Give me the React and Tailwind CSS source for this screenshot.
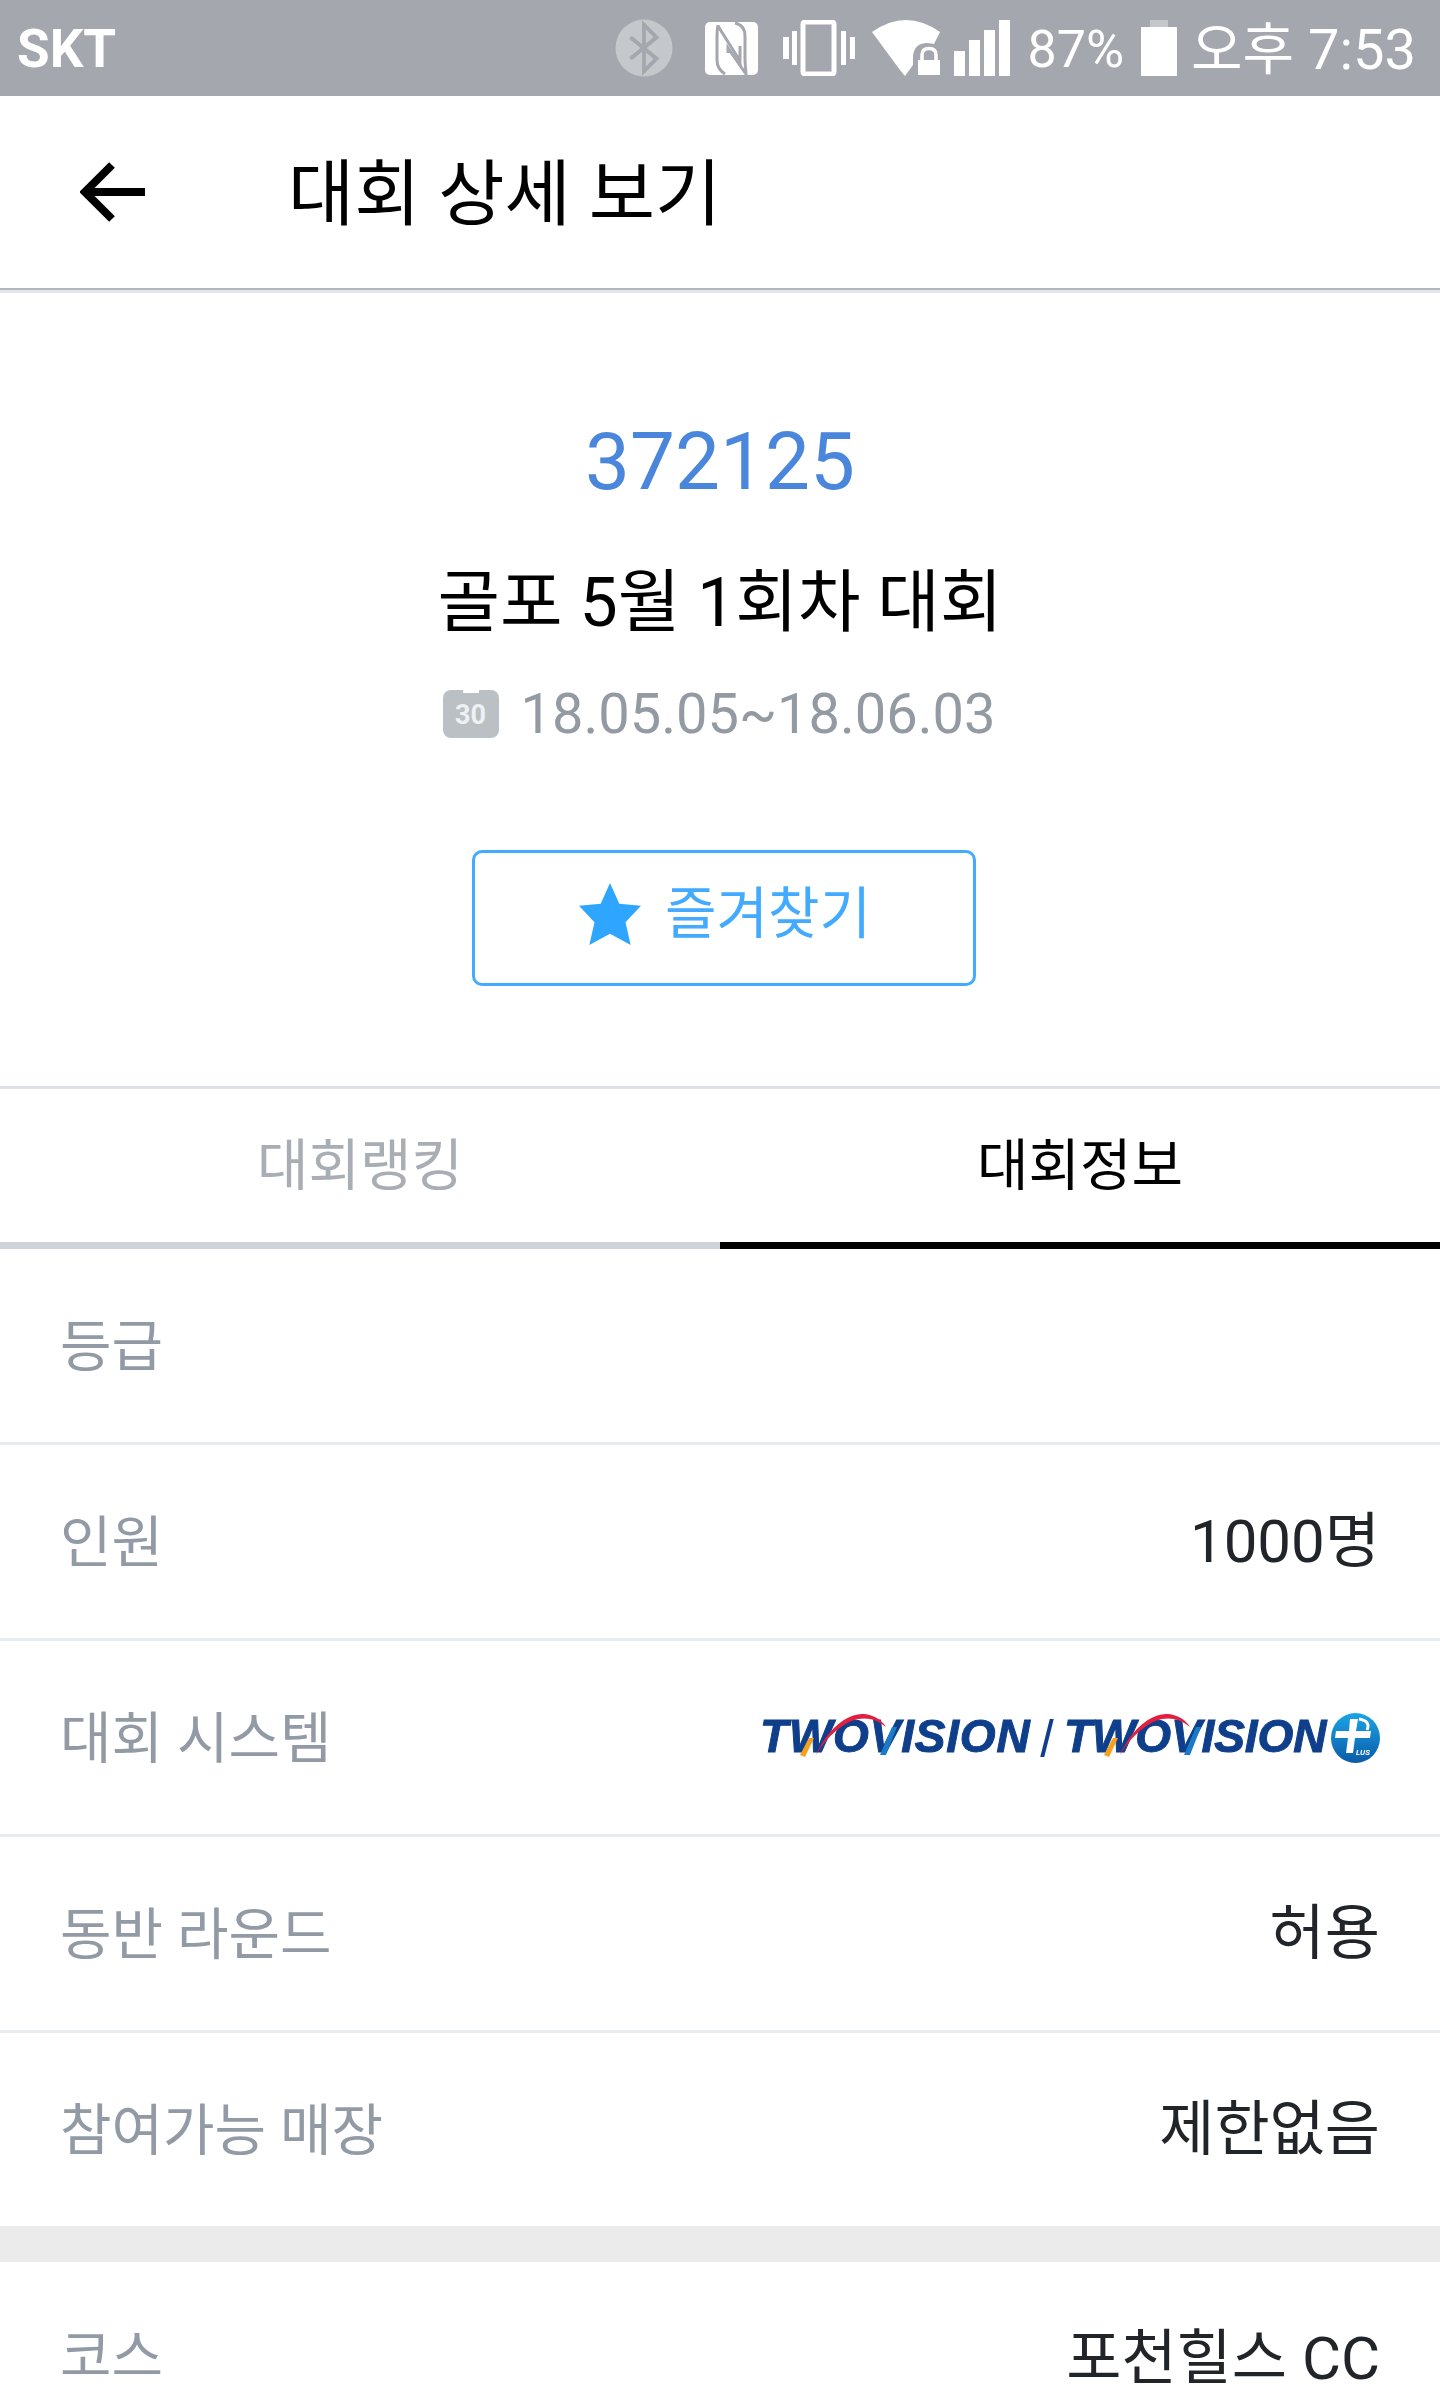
import React from "react";

const font = { fontFamily: '"Roboto", "Noto Sans CJK KR", sans-serif' };

function Bluetooth() {
  return (
    <svg width="58" height="58" viewBox="0 0 60 60" className="block">
      <circle cx="30" cy="30" r="29.5" fill="#c4c8cb" />
      <path d="M16 19 L43 41 L30 54 L30 6 L43 19 L16 41" fill="none" stroke="#a4a7ae" strokeWidth="4" />
    </svg>
  );
}

function Nfc() {
  return (
    <svg width="53" height="53" viewBox="0 0 53 53" className="block">
      <rect width="53" height="53" rx="5" fill="#fff" />
      <path d="M13 3 Q12 8 12 14 L12 38 Q12 47 20 52" fill="none" stroke="#a4a7ae" strokeWidth="3" />
      <path d="M13 4 L35 39 L35 24" fill="none" stroke="#a4a7ae" strokeWidth="3" />
      <path d="M30 1 Q40 3 40 14 L40 39 L41 52 L23 26 L23 31" fill="none" stroke="#a4a7ae" strokeWidth="3" />
    </svg>
  );
}

function Vibrate() {
  return (
    <svg width="72" height="56" viewBox="0 0 72 56" className="block">
      <rect x="0" y="17" width="6" height="22" fill="#fff" />
      <rect x="9" y="11" width="5" height="34" fill="#fff" />
      <rect x="20" y="2" width="31" height="52" rx="2" fill="none" stroke="#fff" strokeWidth="5" />
      <rect x="58" y="11" width="5" height="34" fill="#fff" />
      <rect x="67" y="17" width="5" height="22" fill="#fff" />
    </svg>
  );
}

function Wifi() {
  return (
    <svg width="68" height="56" viewBox="0 0 68 56" className="block">
      <path d="M0 12 Q34 -12 68 12 L62 24 Q58 23 54 23 Q41 24 41 38 L41 45 L33 56 L28 50 Z" fill="#fff" />
      <rect x="46" y="40" width="22" height="15" fill="#fff" />
      <path d="M50 41 L50 35 Q50 28.5 57 28.5 Q64 28.5 64 35 L64 41" fill="none" stroke="#fff" strokeWidth="3.5" />
    </svg>
  );
}

function Signal() {
  return (
    <svg width="56" height="56" viewBox="0 0 56 56" className="block">
      <rect x="0" y="31" width="11" height="25" fill="#fff" />
      <rect x="15" y="20" width="11" height="36" fill="#fff" />
      <rect x="30" y="10" width="11" height="46" fill="#fff" />
      <rect x="45" y="0" width="11" height="56" fill="#fff" />
    </svg>
  );
}

function Battery() {
  return (
    <svg width="36" height="56" viewBox="0 0 36 56" className="block">
      <rect x="9" y="0" width="18" height="7" fill="#c4c8cb" />
      <rect x="0" y="7" width="36" height="49" fill="#fff" />
    </svg>
  );
}

function Calendar() {
  return (
    <div className="relative flex h-[48px] w-[56px] items-center justify-center rounded-[8px] bg-[#bbc0c4]">
      <span className="absolute left-[20px] top-0 h-[3px] w-[16px] bg-white" />
      <span className="mt-[3px] text-[27px] font-bold leading-none text-[#eef0f1]">30</span>
    </div>
  );
}

function Star() {
  return (
    <svg width="62" height="62" viewBox="0 0 60 60" className="block">
      <path d="M30 0 L39 20 L60 22 L45 38 L50 60 L30 49 L10 60 L15 38 L0 22 L21 20Z" fill="#2ea6ff" />
    </svg>
  );
}

function Wordmark({ wide }) {
  return (
    <div className={`relative h-[50px] ${wide ? "w-[270px]" : "w-[262px]"}`}>
      <span
        className={`absolute bottom-[4px] left-0 whitespace-nowrap text-[46px] font-bold italic leading-none text-[#0f3f8a] [-webkit-text-stroke:1px_#0f3f8a] ${
          wide ? "tracking-[0.8px]" : "tracking-[-0.1px]"
        }`}
        style={{ fontFamily: '"Liberation Sans", sans-serif' }}
      >
        TWOVISION
      </span>
      <svg width="270" height="50" viewBox="0 0 270 50" className="absolute left-0 top-0">
        <path d="M56 42 C68 15 88 0 104 1 C114 2 122 7 126 14 C118 7 108 4 98 6 C84 9 68 22 56 42Z" fill="#e21f3f" />
        <path d="M40 42 L49 25 L54 25 L45 44Z" fill="#f5a11c" />
        <path d="M120 42 L132 14 L137 14 L126 42Z" fill="#1a7cc8" />
      </svg>
    </div>
  );
}

function PlusBadge() {
  return (
    <svg width="49" height="50" viewBox="0 0 49 50" className="block">
      <defs>
        <linearGradient id="pb" x1="0" y1="0" x2="0" y2="1">
          <stop offset="0" stopColor="#1aa5e6" />
          <stop offset="1" stopColor="#0b5aa8" />
        </linearGradient>
      </defs>
      <ellipse cx="24.5" cy="25" rx="24.5" ry="25" fill="url(#pb)" />
      <path d="M19 6 L27 6 L25 18 L40 18 L39 25 L24 25 L22 40 L15 40 L17 25 L4 25 L5 18 L18 18Z" fill="#fff" />
      <path d="M28 6 Q40 8 36 17" fill="none" stroke="#fff" strokeWidth="3" />
      <text x="32" y="42" fontSize="8" fontWeight="700" fontStyle="italic" fill="#fff" textAnchor="middle">LUS</text>
    </svg>
  );
}

function Logo() {
  return (
    <div className="flex items-center blur-[0.6px]">
      <Wordmark wide />
      <span className="mx-[15px] block h-[38px] w-[4px] skew-x-[-14deg] bg-[#0f3f8a]" />
      <Wordmark />
      <div className="ml-[5px]">
        <PlusBadge />
      </div>
    </div>
  );
}

function Row({ label, value, last }) {
  return (
    <div
      className={`flex items-center justify-between pl-[60px] pr-[60px] ${
        last ? "h-[193px]" : "h-[196px] border-b-[3px] border-[#e9ecef]"
      }`}
    >
      <span className="mt-[2px] text-[56px] leading-none text-[#929aa6]">{label}</span>
      {typeof value === "string" ? (
        <span className="text-[60px] leading-none text-[#212529]">{value}</span>
      ) : (
        value
      )}
    </div>
  );
}

export default function App() {
  return (
    <div className="h-[2392px] w-[1440px] bg-white" style={font}>
      <div className="flex h-[96px] items-center bg-[#a4a7ae] pl-[17px] pr-[24px] text-white">
        <span className="mt-[3px] text-[53px] font-bold leading-none">SKT</span>
        <div className="ml-auto flex items-center">
          <Bluetooth />
          <div className="ml-[32px]"><Nfc /></div>
          <div className="ml-[25px]"><Vibrate /></div>
          <div className="ml-[17px]"><Wifi /></div>
          <div className="ml-[14px]"><Signal /></div>
          <span className="ml-[18px] mt-[3px] text-[52px] leading-none">87%</span>
          <div className="ml-[17px]"><Battery /></div>
          <span className="ml-[14px] mt-[3px] text-[56px] leading-none">오후 7:53</span>
        </div>
      </div>

      <div className="flex h-[192px] items-center pl-[80px]">
        <svg width="66" height="60" viewBox="0 0 66 60" className="block">
          <path d="M32 3 L5 30 L32 57 M5 30 L65 30" fill="none" stroke="#000" strokeWidth="8" />
        </svg>
        <span className="ml-[142px] mt-[6px] text-[72px] leading-none text-black">대회 상세 보기</span>
      </div>
      <div className="h-[2px] bg-[#b3b7be]" />
      <div className="h-[3px] bg-[#e4e7ea]" />

      <div className="flex h-[796px] flex-col items-center border-b-[3px] border-[#dee2e6] pt-[124px]">
        <div className="text-[80px] leading-[90px] text-[#4a86dc]">372125</div>
        <div className="mt-[56px] text-[68px] leading-[80px] text-black">골포 5월 1회차 대회</div>
        <div className="mr-[2px] mt-[41px] flex h-[60px] items-center">
          <Calendar />
          <span className="ml-[22px] text-[56px] leading-none text-[#939aa1]">18.05.05~18.06.03</span>
        </div>
        <div className="ml-[7px] mt-[106px] flex h-[136px] w-[504px] items-center justify-center rounded-[10px] border-[3px] border-[#42abff] pb-[8px] pl-[3px] text-[#42abff]">
          <Star />
          <span className="ml-[24px] text-[56px] leading-none">즐겨찾기</span>
        </div>
      </div>

      <div className="grid h-[160px] grid-cols-2 text-[56px] leading-none">
        <div className="flex items-center justify-center border-b-[7px] border-[#ced4da] text-[#a9aeb4]">대회랭킹</div>
        <div className="flex items-center justify-center border-b-[7px] border-black text-black">대회정보</div>
      </div>

      <Row label="등급" value="" />
      <Row label="인원" value="1000명" />
      <Row label="대회 시스템" value={<Logo />} />
      <Row label="동반 라운드" value="허용" />
      <Row label="참여가능 매장" value="제한없음" last />
      <div className="h-[36px] bg-[#ebebeb]" />
      <div className="flex h-[134px] items-start justify-between pl-[60px] pr-[60px] pt-[67px]">
        <span className="text-[56px] leading-none text-[#929aa6]">코스</span>
        <span className="text-[60px] leading-none text-[#212529]">포천힐스 CC</span>
      </div>
    </div>
  );
}
